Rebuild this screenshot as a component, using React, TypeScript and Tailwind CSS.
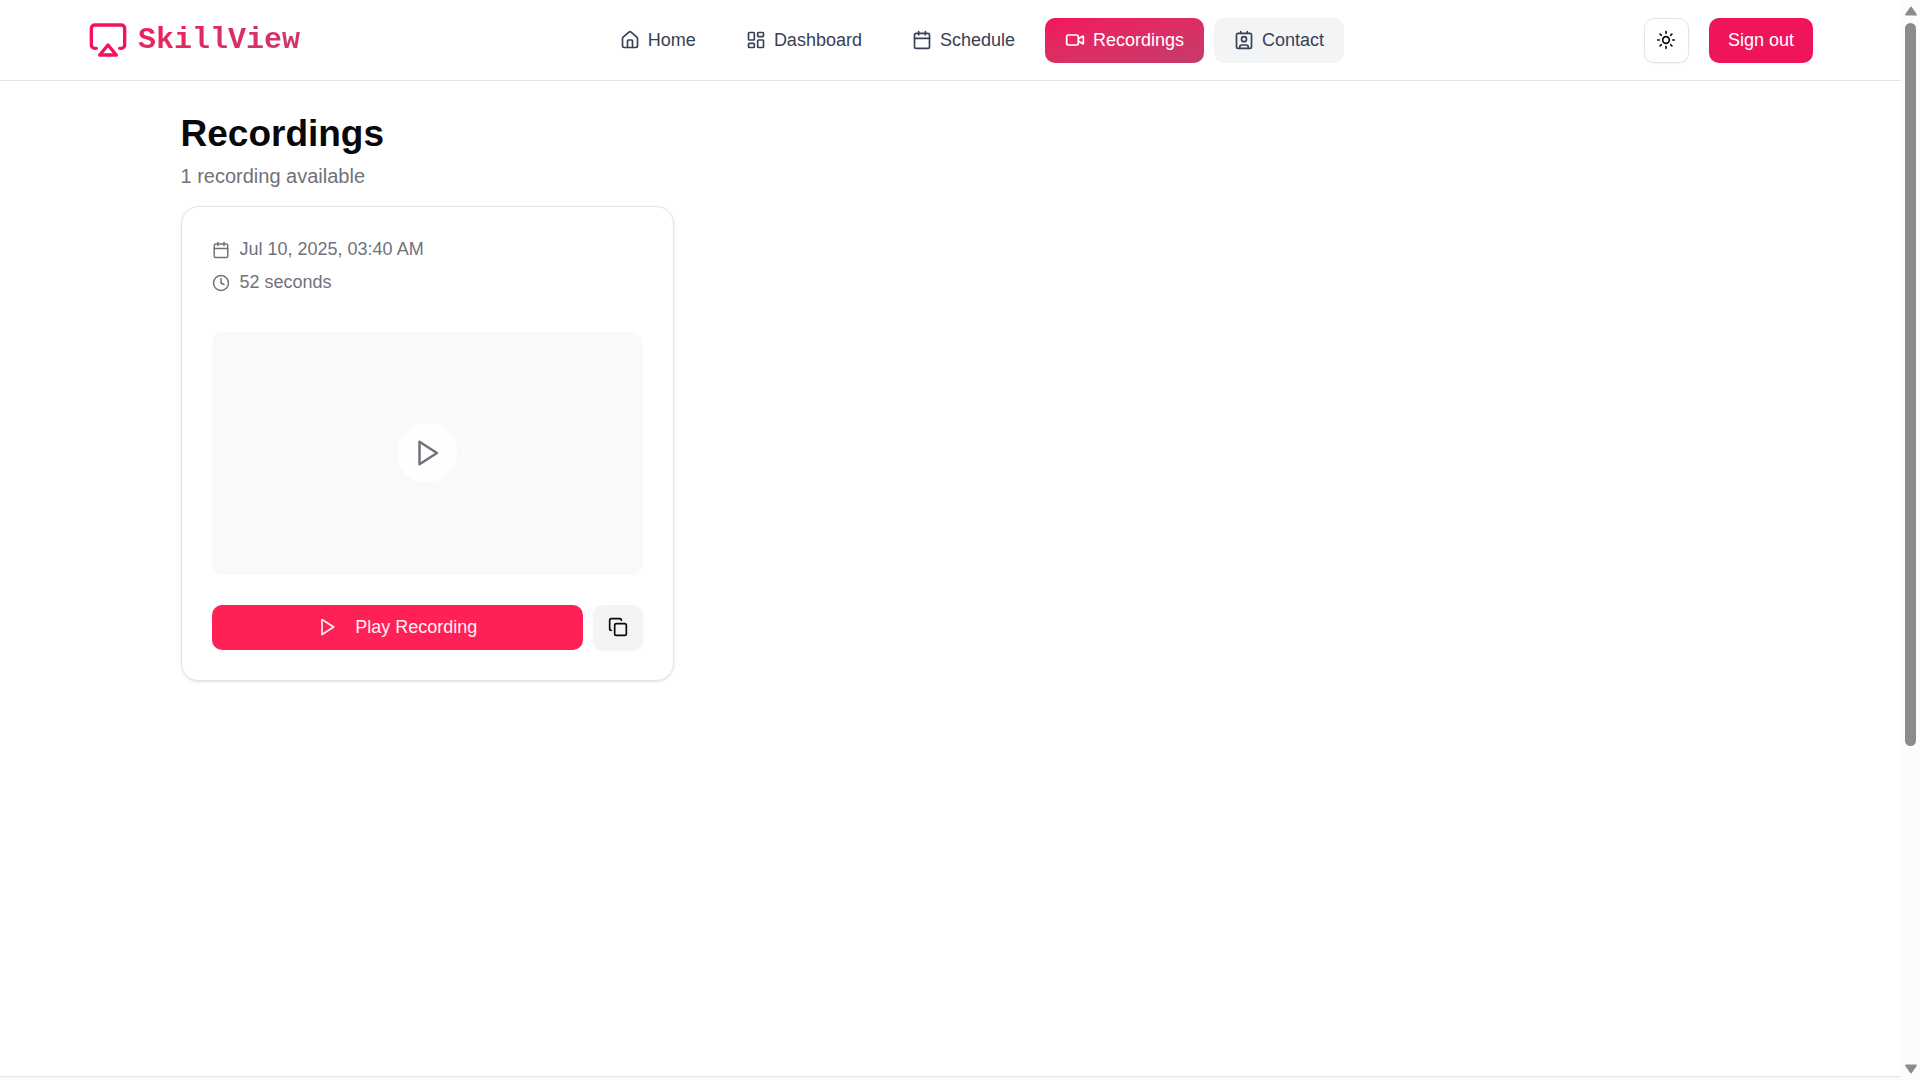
import React from "react";
import { Airplay, Calendar, Clock, Contact, Copy, House, LayoutDashboard, Sun } from "lucide-react";

type IconProps = { className?: string };

function PlayIcon({ className }: IconProps) {
  return (
    <svg viewBox="0 0 24 24" fill="none" stroke="currentColor" strokeWidth="2" strokeLinecap="round" strokeLinejoin="round" className={className} aria-hidden="true">
      <polygon points="6 3 20 12 6 21 6 3" />
    </svg>
  );
}

function VideoIcon({ className }: IconProps) {
  return (
    <svg viewBox="0 0 24 24" fill="none" stroke="currentColor" strokeWidth="2" strokeLinecap="round" strokeLinejoin="round" className={className} aria-hidden="true">
      <path d="m16 13 5.223 3.482a.5.5 0 0 0 .777-.416V7.87a.5.5 0 0 0-.752-.432L16 10.5" />
      <rect x="2" y="6" width="14" height="12" rx="2" />
    </svg>
  );
}

const navItems = [
  { label: "Home", Icon: House, style: "text-[#364153]" },
  { label: "Dashboard", Icon: LayoutDashboard, style: "text-[#364153]" },
  { label: "Schedule", Icon: Calendar, style: "text-[#364153]" },
  { label: "Recordings", Icon: VideoIcon, style: "bg-linear-to-br from-[#f4135b] to-[#c43a6b] text-white" },
  { label: "Contact", Icon: Contact, style: "bg-gray-100 text-[#364153]" },
];

function Header() {
  return (
    <header className="flex h-[81px] shrink-0 items-center justify-between border-b border-[#e4e4e7] px-22">
      <a href="#" className="flex items-center gap-2.5">
        <Airplay className="size-10 text-[#f4135b]" />
        <span className="bg-linear-to-br from-[#f4135b] to-[#c43a6b] bg-clip-text font-['Liberation_Mono',monospace] text-[30px] leading-10 font-bold text-transparent">
          SkillView
        </span>
      </a>
      <nav className="flex items-center gap-2.5">
        {navItems.map(({ label, Icon, style }) => (
          <a key={label} href="#" className={`flex h-[45px] items-center gap-2 rounded-[10px] px-5 ${style}`}>
            <Icon className="size-5" />
            {label}
          </a>
        ))}
      </nav>
      <div className="flex items-center gap-5">
        <button aria-label="Toggle theme" className="flex size-[45px] items-center justify-center rounded-[10px] border border-[#e4e4e7] shadow-xs">
          <Sun className="size-5" />
        </button>
        <button className="h-[45px] rounded-[10px] bg-[#f0145a] px-[19px] text-white">Sign out</button>
      </div>
    </header>
  );
}

function RecordingCard() {
  return (
    <article className="rounded-[18px] border border-[#e4e4e7] p-[30px] shadow-sm">
      <div className="flex flex-col gap-2 leading-[25px] text-[#71717b]">
        <div className="flex items-center gap-2.5">
          <Calendar className="size-[18px]" />
          Jul 10, 2025, 03:40 AM
        </div>
        <div className="flex items-center gap-2.5">
          <Clock className="size-[18px]" />
          52 seconds
        </div>
      </div>
      <div className="mt-[37px] flex aspect-video items-center justify-center rounded-xl bg-[#f9f9f9]">
        <button aria-label="Preview recording" className="flex size-15 items-center justify-center rounded-full bg-[#fdfefe] text-[#71717b]">
          <PlayIcon className="size-[30px]" />
        </button>
      </div>
      <div className="mt-[30px] flex gap-2.5">
        <button className="flex h-[45px] flex-1 items-center justify-center gap-[18px] rounded-[10px] bg-[#ff2056] text-[#fff1f2]">
          <PlayIcon className="size-5" />
          Play Recording
        </button>
        <button aria-label="Copy link" className="flex h-[45px] w-[50px] items-center justify-center rounded-[10px] bg-[#f4f4f5] shadow-xs">
          <Copy className="size-5" />
        </button>
      </div>
    </article>
  );
}

function ScrollTrack() {
  return (
    <div className="flex w-[19px] shrink-0 flex-col items-center bg-[#fcfcfc] py-1.5" aria-hidden="true">
      <svg viewBox="0 0 12 10" className="h-2.5 w-3 fill-[#8b8b8b]">
        <path d="M5 1.2Q6-.4 7 1.2L11.6 8Q12.4 9.6 11 9.6H1Q-.4 9.6.4 8Z" />
      </svg>
      <div className="grid w-[11px] flex-1 grid-rows-[724fr_318fr] pt-[7px]">
        <div className="rounded-full bg-[#8b8b8b]" />
      </div>
      <svg viewBox="0 0 12 10" className="h-2.5 w-3 rotate-180 fill-[#8b8b8b]">
        <path d="M5 1.2Q6-.4 7 1.2L11.6 8Q12.4 9.6 11 9.6H1Q-.4 9.6.4 8Z" />
      </svg>
    </div>
  );
}

export default function App() {
  return (
    <div className="flex h-screen overflow-hidden bg-white font-['Liberation_Sans',Arial,sans-serif] text-[18px] text-[#09090b]">
      <div className="flex min-w-0 flex-1 flex-col">
        <Header />
        <main className="mx-auto w-full max-w-[1600px] flex-1 px-[30px] pt-[30px]">
          <h1 className="text-[37px] leading-[45px] font-bold">Recordings</h1>
          <p className="mt-[5px] text-[20px] leading-[30px] text-[#71717b]">1 recording available</p>
          <div className="mt-[15px] grid grid-cols-3 items-start gap-[30px]">
            <RecordingCard />
          </div>
        </main>
        <footer className="h-1 shrink-0 border-t border-[#e4e4e7] bg-gray-50" />
      </div>
      <ScrollTrack />
    </div>
  );
}
